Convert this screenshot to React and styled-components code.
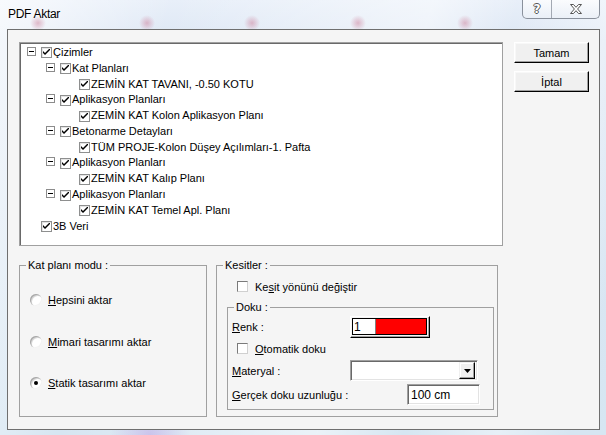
import React from 'react'
import styled, { createGlobalStyle } from 'styled-components'

const GlobalStyle = createGlobalStyle`
  html, body { margin: 0; padding: 0; }
  body {
    width: 606px;
    height: 435px;
    overflow: hidden;
    font-family: "Liberation Sans", Arial, sans-serif;
    font-size: 11px;
    color: #000;
  }
`

const Window = styled.div`
  width: 606px;
  height: 435px;
  box-sizing: border-box;
  display: flex;
  flex-direction: column;
  padding: 0 6px 5px 7px;
  background:
    radial-gradient(circle at 38px 23px, rgba(200,110,140,.45), rgba(200,110,140,0) 8px),
    radial-gradient(circle at 147px 23px, rgba(200,110,140,.45), rgba(200,110,140,0) 8px),
    radial-gradient(circle at 252px 23px, rgba(200,110,140,.45), rgba(200,110,140,0) 8px),
    radial-gradient(circle at 358px 23px, rgba(200,110,140,.45), rgba(200,110,140,0) 8px),
    radial-gradient(circle at 465px 23px, rgba(200,110,140,.45), rgba(200,110,140,0) 8px),
    radial-gradient(ellipse at 150px 435px, rgba(190,170,230,.6), rgba(190,170,230,0) 40px),
    linear-gradient(105deg, rgba(255,255,255,.7) 0, rgba(255,255,255,.2) 18%, rgba(255,255,255,0) 24%,
      rgba(255,255,255,.5) 60%, rgba(255,255,255,0) 72%, rgba(255,255,255,.4) 85%, rgba(255,255,255,0) 95%),
    linear-gradient(to bottom, #e8eff9 0, #dde7f4 40px, #d6e6f2 100%);
`

const TitleBar = styled.div`
  height: 29px;
  flex: none;
  display: flex;
  align-items: flex-start;
`

const Title = styled.div`
  margin: 7px 0 0 1px;
  font-size: 12px;
  line-height: 15px;
  letter-spacing: -0.3px;
  text-shadow: 0 0 6px #fff, 0 0 3px #fff;
`

const Caption = styled.div`
  margin-left: auto;
  display: flex;
  height: 19px;
  box-sizing: border-box;
  border: 1px solid #8a919c;
  border-top: none;
  border-radius: 0 0 5px 5px;
  background: linear-gradient(to bottom, rgba(255,255,255,.75), rgba(235,240,247,.8));
  overflow: hidden;
`

const CaptionButton = styled.div`
  width: ${p => p.w}px;
  display: flex;
  align-items: center;
  justify-content: center;
  & + & { border-left: 1px solid #a3a9b3; }
`

const HelpGlyph = styled.span`
  font-family: "DejaVu Sans", sans-serif;
  font-weight: bold;
  font-size: 12px;
  line-height: 12px;
  color: #fff;
  text-shadow: 1px 0 #555, -1px 0 #555, 0 1px #555, 0 -1px #555;
`

const Client = styled.div`
  flex: 1;
  border: 1px solid #6f6f6f;
  background: #f5f5f5;
  padding: 12px 0 0 11px;
  display: flex;
  flex-direction: column;
`

const TopRow = styled.div`
  display: flex;
  align-items: flex-start;
`

const Tree = styled.div`
  width: 484px;
  height: 204px;
  box-sizing: border-box;
  background: #fff;
  border: 1px solid #a0a0a0;
  box-shadow: inset 1px 1px 0 #696969;
  padding-top: 1px;
`

const TreeRow = styled.div`
  height: 15.8px;
  display: flex;
  align-items: center;
  padding-left: ${p => 7 + p.level * 19}px;
  white-space: nowrap;
`

const ExpanderSlot = styled.span`
  width: 14px;
  flex: none;
  display: flex;
  align-items: center;
`

const Expander = styled.span`
  width: 9px;
  height: 9px;
  box-sizing: border-box;
  border: 1px solid #8c8c8c;
  background: #fff;
  position: relative;
  margin-top: -1px;
  &::after {
    content: '';
    position: absolute;
    left: 1px;
    top: 3px;
    width: 5px;
    height: 1px;
    background: #000;
  }
`

const TreeCheck = styled.span`
  width: 11px;
  height: 11px;
  flex: none;
  box-sizing: border-box;
  border: 1px solid #8e8f8f;
  box-shadow: inset 1px 1px 0 #e4e4e4;
  background: #fff;
  margin: 2px 1px 0 0;
  display: flex;
  align-items: center;
  justify-content: center;
`

const TreeLabel = styled.span`
  line-height: 16px;
`

const ButtonColumn = styled.div`
  margin-left: 11px;
  display: flex;
  flex-direction: column;
  gap: 8px;
`

const Button = styled.button`
  width: 75px;
  height: 21px;
  padding: 0;
  font-family: inherit;
  font-size: 11px;
  color: #000;
  background: #f0f0f0;
  border: 1px solid;
  border-color: #fff #000 #000 #fff;
  box-shadow: inset -1px -1px 0 #a0a0a0, inset 1px 1px 0 #f8f8f8;
`

const BottomRow = styled.div`
  margin-top: 13px;
  display: flex;
  gap: 9px;
  height: 158px;
`

const Group = styled.fieldset`
  margin: 0;
  padding: 0;
  min-width: 0;
  box-sizing: border-box;
  width: ${p => p.w}px;
  height: ${p => p.h}px;
  border: 1px solid #a0a0a0;
`

const Legend = styled.legend`
  padding: 0 2px;
  margin-left: ${p => p.indent}px;
  line-height: 13px;
  font-size: 11px;
`

const RadioList = styled.div`
  padding: 21px 0 0 10px;
  display: flex;
  flex-direction: column;
  gap: 27.5px;
`

const RadioRow = styled.label`
  height: 14px;
  display: flex;
  align-items: center;
  gap: 6px;
`

const RadioDot = styled.span`
  width: 12px;
  height: 12px;
  flex: none;
  box-sizing: border-box;
  border-radius: 50%;
  background: #fff;
  box-shadow: inset 1px 1px 0 #a8a8a8, inset -1px -1px 0 #f2f2f2, inset 2px 2px 0 #d8d8d8;
  display: flex;
  align-items: center;
  justify-content: center;
  &::after {
    content: '';
    width: 4px;
    height: 4px;
    border-radius: 50%;
    background: ${p => (p.checked ? '#000' : 'transparent')};
  }
`

const CheckRow = styled.label`
  height: 13px;
  display: flex;
  align-items: center;
  gap: 7px;
  padding-left: ${p => p.indent}px;
`

const CheckBox = styled.span`
  width: 11px;
  height: 11px;
  flex: none;
  box-sizing: border-box;
  border: 1px solid;
  border-color: #7a7a7a #d0d0d0 #d0d0d0 #7a7a7a;
  background: #fff;
`

const KesitBody = styled.div`
  padding: 8px 0 0 20px;
`

const Doku = styled.fieldset`
  margin: 8px 3px 0 -10px;
  padding: 2px 0 0 4px;
  min-width: 0;
  box-sizing: border-box;
  height: 109px;
  border: 1px solid #a0a0a0;
`

const FieldRow = styled.div`
  height: ${p => p.h || 21}px;
  margin-top: ${p => p.mt || 0}px;
  display: flex;
  align-items: center;
`

const FieldLabel = styled.span`
  width: ${p => p.w}px;
  flex: none;
`

const ColorPick = styled.div`
  width: 80px;
  height: 22px;
  box-sizing: border-box;
  border: 1px solid;
  border-color: #fff #000 #000 #fff;
  box-shadow: inset -1px -1px 0 #a0a0a0;
  padding: 1px 2px 2px 1px;
  display: flex;
`

const ColorInner = styled.div`
  flex: 1;
  display: flex;
  border: 1px solid #000;
`

const ColorIndex = styled.span`
  width: 21px;
  background: #fff;
  border-right: 1px solid #808080;
  padding-left: 1px;
  font-size: 12px;
  line-height: 16px;
`

const ColorSwatch = styled.span`
  flex: 1;
  background: ${p => p.color};
`

const Sunken = styled.div`
  width: ${p => p.w}px;
  height: 21px;
  box-sizing: border-box;
  border: 1px solid;
  border-color: #a0a0a0 #fff #fff #a0a0a0;
  box-shadow: inset 1px 1px 0 #696969, inset -1px -1px 0 #e3e3e3;
  background: #fff;
  display: flex;
  align-items: center;
  padding: 2px;
`

const InputText = styled.span`
  padding-left: 1px;
  font-size: 12px;
`

const DropButton = styled.span`
  margin-left: auto;
  width: 16px;
  height: 17px;
  box-sizing: border-box;
  background: #f0f0f0;
  border: 1px solid;
  border-color: #f0f0f0 #000 #000 #f0f0f0;
  box-shadow: inset -1px -1px 0 #a0a0a0, inset 1px 1px 0 #fff;
  display: flex;
  align-items: center;
  justify-content: center;
`

const tree = [
  { level: 0, label: 'Çizimler', expand: true },
  { level: 1, label: 'Kat Planları', expand: true },
  { level: 2, label: 'ZEMİN KAT TAVANI, -0.50 KOTU' },
  { level: 1, label: 'Aplikasyon Planları', expand: true },
  { level: 2, label: 'ZEMİN KAT Kolon Aplikasyon Planı' },
  { level: 1, label: 'Betonarme Detayları', expand: true },
  { level: 2, label: 'TÜM PROJE-Kolon Düşey Açılımları-1. Pafta' },
  { level: 1, label: 'Aplikasyon Planları', expand: true },
  { level: 2, label: 'ZEMİN KAT Kalıp Planı' },
  { level: 1, label: 'Aplikasyon Planları', expand: true },
  { level: 2, label: 'ZEMİN KAT Temel Apl. Planı' },
  { level: 0, label: '3B Veri' },
]

const Check = () => (
  <svg width="7" height="7" viewBox="0 0 7 7">
    <path d="M0 2 L0 4 L2 6 L7 1 L7 -1 L2 4 Z" fill="#000" />
  </svg>
)

const App = () => (
  <Window>
    <GlobalStyle />
    <TitleBar>
      <Title>PDF Aktar</Title>
      <Caption>
        <CaptionButton w={28}>
          <HelpGlyph>?</HelpGlyph>
        </CaptionButton>
        <CaptionButton w={47}>
          <svg width="12" height="10" viewBox="0 0 12 10">
            <path d="M0.5 0.5 H3.5 L6 3.3 L8.5 0.5 H11.5 L7.6 5 L11.5 9.5 H8.5 L6 6.7 L3.5 9.5 H0.5 L4.4 5 Z"
              fill="#fff" stroke="#555" strokeWidth="1" />
          </svg>
        </CaptionButton>
      </Caption>
    </TitleBar>
    <Client>
      <TopRow>
        <Tree>
          {tree.map((n, i) => (
            <TreeRow key={i} level={n.level}>
              <ExpanderSlot>{n.expand && <Expander />}</ExpanderSlot>
              <TreeCheck><Check /></TreeCheck>
              <TreeLabel>{n.label}</TreeLabel>
            </TreeRow>
          ))}
        </Tree>
        <ButtonColumn>
          <Button>Tamam</Button>
          <Button>İptal</Button>
        </ButtonColumn>
      </TopRow>
      <BottomRow>
        <Group w={188} h={158}>
          <Legend indent={6}>Kat planı modu :</Legend>
          <RadioList>
            <RadioRow><RadioDot /><span><u>H</u>epsini aktar</span></RadioRow>
            <RadioRow><RadioDot /><span><u>M</u>imari tasarımı aktar</span></RadioRow>
            <RadioRow><RadioDot checked /><span><u>S</u>tatik tasarımı aktar</span></RadioRow>
          </RadioList>
        </Group>
        <Group w={282} h={158}>
          <Legend indent={6}>Kesitler :</Legend>
          <KesitBody>
            <CheckRow indent={0}><CheckBox /><span>Ke<u>s</u>it yönünü değiştir</span></CheckRow>
            <Doku>
              <Legend indent={2}>Doku :</Legend>
              <FieldRow h={22}>
                <FieldLabel w={118}><u>R</u>enk :</FieldLabel>
                <ColorPick>
                  <ColorInner>
                    <ColorIndex>1</ColorIndex>
                    <ColorSwatch color="#ff0000" />
                  </ColorInner>
                </ColorPick>
              </FieldRow>
              <FieldRow h={13} mt={4}>
                <CheckRow indent={5}><CheckBox /><span><u>O</u>tomatik doku</span></CheckRow>
              </FieldRow>
              <FieldRow mt={5}>
                <FieldLabel w={118}><u>M</u>ateryal :</FieldLabel>
                <Sunken w={128}>
                  <DropButton>
                    <svg width="7" height="4" viewBox="0 0 7 4"><path d="M0 0 H7 L3.5 4 Z" fill="#000" /></svg>
                  </DropButton>
                </Sunken>
              </FieldRow>
              <FieldRow mt={3}>
                <FieldLabel w={175}><u>G</u>erçek doku uzunluğu :</FieldLabel>
                <Sunken w={73}><InputText>100 cm</InputText></Sunken>
              </FieldRow>
            </Doku>
          </KesitBody>
        </Group>
      </BottomRow>
    </Client>
  </Window>
)

export default App
